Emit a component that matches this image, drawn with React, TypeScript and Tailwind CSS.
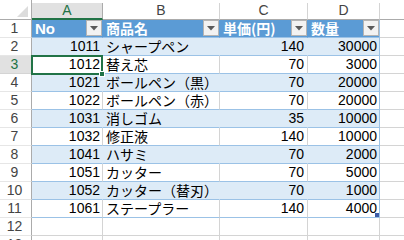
import React from 'react';

type Row = [number, string, number, number];

const rows: Row[] = [
  [1011, 'シャープペン', 140, 30000],
  [1012, '替え芯', 70, 3000],
  [1021, 'ボールペン（黒）', 70, 20000],
  [1022, 'ボールペン（赤）', 70, 20000],
  [1031, '消しゴム', 35, 10000],
  [1032, '修正液', 140, 10000],
  [1041, 'ハサミ', 70, 2000],
  [1051, 'カッター', 70, 5000],
  [1052, 'カッター（替刃）', 70, 1000],
  [1061, 'ステープラー', 140, 4000],
];

const columns = ['A', 'B', 'C', 'D'];

const FilterButton: React.FC = () => (
  <div className="flex h-[16px] w-[16px] shrink-0 items-center justify-center self-start border border-[#b4b4b4] bg-[#f2f2f2]">
    <svg width="8" height="5" viewBox="0 0 8 5">
      <path d="M0 0 H8 L4 4.5 Z" fill="#5a5a5a" />
    </svg>
  </div>
);

const RowHeader: React.FC<{ n: number; active?: boolean }> = ({ n, active }) => (
  <div
    className={
      active
        ? 'flex h-[18px] items-end justify-center border-r border-b border-r-[#ababab] border-b-[#d4d4d4] bg-[#e1e1e1] pr-[2px] text-[14px] leading-[17px] text-[#217346]'
        : 'flex h-[18px] items-end justify-center border-r border-b border-r-[#ababab] border-b-[#e6e6e6] bg-white pr-[2px] text-[14px] leading-[17px] text-[#444]'
    }
  >
    {n}
  </div>
);

export default function App() {
  return (
    <div className="h-[240px] w-[404px] overflow-hidden bg-white font-['Liberation_Sans','Noto_Sans_CJK_JP',sans-serif]">
      <div className="relative grid grid-cols-[32px_71px_117px_88px_72px_1fr]">
        {/* column headers */}
        <div className="relative h-[20px] border-r border-b border-r-[#ababab] border-b-[#ababab] bg-white">
          <svg className="absolute left-[17px] top-[6px]" width="11" height="11" viewBox="0 0 11 11">
            <path d="M11 0 V11 H0 Z" fill="#dcdcdc" />
          </svg>
        </div>
        {columns.map((c, i) =>
          i === 0 ? (
            <div
              key={c}
              className="mt-[3px] flex h-[17px] items-end justify-center border-r border-b-2 border-r-[#ababab] border-b-[#217346] bg-[#e1e1e1] text-[14px] leading-[15px] text-[#217346]"
            >
              {c}
            </div>
          ) : (
            <div
              key={c}
              className="mt-[3px] flex h-[17px] items-end justify-center border-r border-b border-r-[#d4d4d4] border-b-[#ababab] bg-white pb-[1px] text-[14px] leading-[15px] text-[#444]"
            >
              {c}
            </div>
          )
        )}
        <div className="mt-[3px] h-[17px] border-b border-b-[#ababab] bg-white" />

        {/* row 1: table header */}
        <RowHeader n={1} />
        <div className="flex h-[18px] items-start justify-between border-r border-b border-r-[#5b9bd5] border-b-[#9bc2e6] bg-[#5b9bd5] pl-[3px] text-[15px] font-bold leading-[17px] text-white">
          <span>No</span>
          <FilterButton />
        </div>
        <div className="flex h-[18px] items-start justify-between overflow-hidden border-r border-b border-r-[#5b9bd5] border-b-[#9bc2e6] bg-[#5b9bd5] pl-[3px] font-['Noto_Sans_CJK_JP',sans-serif] text-[14px] font-bold leading-[17px] text-white">
          <span>商品名</span>
          <FilterButton />
        </div>
        <div className="flex h-[18px] items-start justify-between overflow-hidden border-r border-b border-r-[#5b9bd5] border-b-[#9bc2e6] bg-[#5b9bd5] pl-[3px] font-['Noto_Sans_CJK_JP',sans-serif] text-[14px] font-bold leading-[17px] text-white">
          <span>単価(円)</span>
          <FilterButton />
        </div>
        <div className="flex h-[18px] items-start justify-between overflow-hidden border-r border-b border-r-[#9bc2e6] border-b-[#9bc2e6] bg-[#5b9bd5] pl-[3px] font-['Noto_Sans_CJK_JP',sans-serif] text-[14px] font-bold leading-[17px] text-white">
          <span>数量</span>
          <FilterButton />
        </div>
        <div className="h-[18px] border-b border-b-[#d4d4d4]" />

        {/* data rows */}
        {rows.map(([no, name, price, qty], i) => {
          const banded = i % 2 === 0;
          const last = i === rows.length - 1;
          const cell = banded
            ? 'h-[18px] border-r border-b border-r-[#ddebf7] border-b-[#9bc2e6] bg-[#ddebf7] text-[14px] leading-[17px] text-black'
            : 'h-[18px] border-r border-b border-r-[#d4d4d4] border-b-[#9bc2e6] bg-white text-[14px] leading-[17px] text-black';
          return (
            <React.Fragment key={no}>
              <RowHeader n={i + 2} active={i === 1} />
              <div className={`${cell} pr-[2px] text-right`}>{no}</div>
              <div className={`${cell} overflow-hidden whitespace-nowrap pl-[3px] font-['Noto_Sans_CJK_JP',sans-serif] text-[13px]`}>
                {name}
              </div>
              <div className={`${cell} pr-[3px] text-right`}>{price}</div>
              <div
                className={
                  banded
                    ? 'relative h-[18px] border-r border-b border-r-[#9bc2e6] border-b-[#9bc2e6] bg-[#ddebf7] pr-[2px] text-right text-[14px] leading-[17px] text-black'
                    : 'relative h-[18px] border-r border-b border-r-[#9bc2e6] border-b-[#9bc2e6] bg-white pr-[2px] text-right text-[14px] leading-[17px] text-black'
                }
              >
                {qty}
                {last && <span className="absolute right-0 bottom-0 h-[4px] w-[4px] bg-[#3d5ca8]" />}
              </div>
              <div className="h-[18px] border-b border-b-[#d4d4d4]" />
            </React.Fragment>
          );
        })}

        {/* empty rows */}
        {[12, 13].map((n) => (
          <React.Fragment key={n}>
            <RowHeader n={n} />
            <div className="h-[18px] border-r border-b border-[#d4d4d4]" />
            <div className="h-[18px] border-r border-b border-[#d4d4d4]" />
            <div className="h-[18px] border-r border-b border-[#d4d4d4]" />
            <div className="h-[18px] border-r border-b border-[#d4d4d4]" />
            <div className="h-[18px] border-b border-[#d4d4d4]" />
          </React.Fragment>
        ))}

        {/* active cell A3 */}
        <div className="absolute left-[31px] top-[55px] h-[20px] w-[72px] border-2 border-[#217346]" />
        <div className="absolute left-[99px] top-[71px] h-[6px] w-[6px] border border-white bg-[#217346]" />
      </div>
    </div>
  );
}
